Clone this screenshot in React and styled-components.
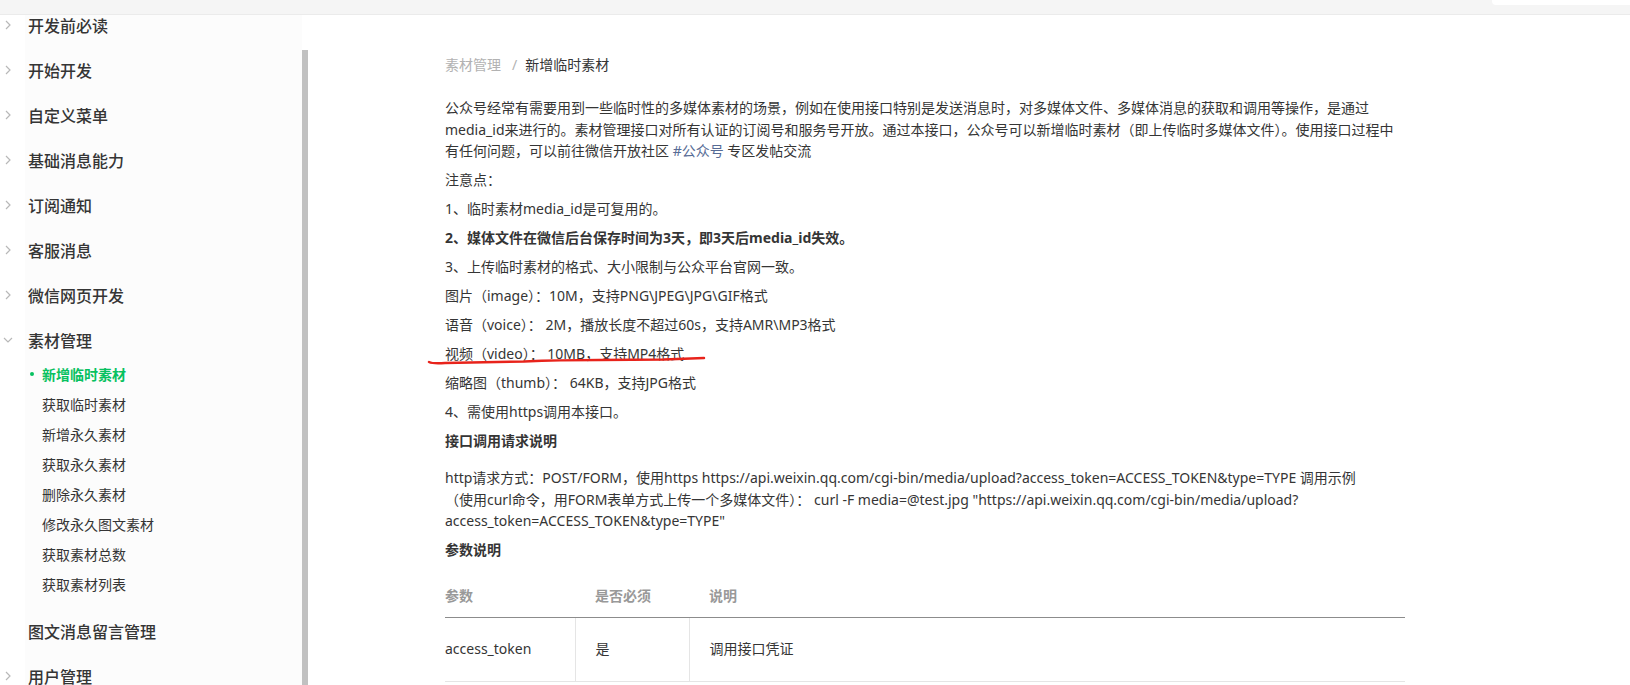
import React from "react";
import styled, { createGlobalStyle } from "styled-components";

const GlobalStyle = createGlobalStyle`
  html, body {
    margin: 0;
    padding: 0;
    background: #fff;
  }
  body {
    font-family: "Noto Sans", "Noto Sans CJK SC", sans-serif;
    color: #353535;
    -webkit-font-smoothing: antialiased;
  }
`;

const Page = styled.div`
  width: 1630px;
  height: 685px;
  display: flex;
  flex-direction: column;
  overflow: hidden;
`;

const TopBar = styled.div`
  height: 14px;
  flex: none;
  display: flex;
  justify-content: flex-end;
  align-items: flex-start;
  background: #f5f5f5;
  border-bottom: 1px solid #ebebeb;
`;

const SearchStub = styled.div`
  width: 138px;
  height: 5px;
  background: #fff;
  border-bottom-left-radius: 4px;
`;

const Body = styled.div`
  flex: 1;
  display: flex;
  min-height: 0;
`;

const Sidebar = styled.nav`
  width: 302px;
  flex: none;
  overflow: hidden;
  background: linear-gradient(to right, #fff 25px, #fcfcfc 25px);
`;

const NavList = styled.div`
  margin-top: -12.5px;
`;

const NavRow = styled.div`
  height: 45px;
  display: grid;
  grid-template-columns: 25px 1fr;
  align-items: center;
  font-family: "Noto Sans CJK SC", sans-serif;
  font-size: 16px;
  font-weight: 500;
  color: #353535;
  white-space: nowrap;
`;

const Arrow = styled.span`
  display: flex;
  align-items: center;
  padding-left: ${(p) => (p.$open ? 3 : 5)}px;
`;

const Label = styled.span`
  padding-left: 3px;
`;

const SubList = styled.div`
  margin-top: -4px;
  padding-bottom: 10px;
`;

const SubRow = styled.div`
  height: 30px;
  display: flex;
  align-items: center;
  padding-left: 30px;
  font-family: "Noto Sans CJK SC", sans-serif;
  font-size: 14px;
  white-space: nowrap;
  color: ${(p) => (p.$active ? "#07c160" : "#353535")};
  font-weight: ${(p) => (p.$active ? 700 : 400)};
`;

const Dot = styled.span`
  width: 4px;
  height: 4px;
  border-radius: 50%;
  margin-right: 8px;
  background: #07c160;
  visibility: ${(p) => (p.$show ? "visible" : "hidden")};
`;

const ScrollTrack = styled.div`
  width: 6px;
  flex: none;
  display: flex;
  flex-direction: column;
`;

const ScrollThumb = styled.div`
  flex: 1;
  margin-top: 35px;
  background: #c1c1c1;
`;

const Main = styled.main`
  flex: 1;
  padding: 39px 0 0 137px;
  overflow: hidden;
`;

const Content = styled.div`
  width: 960px;
  font-size: 14px;
  line-height: 21.5px;
`;

const Crumbs = styled.div`
  display: flex;
  align-items: center;
  margin-bottom: 21.5px;
  white-space: nowrap;
`;

const CrumbLink = styled.span`
  color: #b2b2b2;
`;

const CrumbSep = styled.span`
  color: #b2b2b2;
  margin: 0 8px 0 11px;
`;

const Para = styled.p`
  margin: 0 0 7.5px;
  font-weight: ${(p) => (p.$bold ? 700 : 400)};
  position: relative;
`;

const Line = styled.span`
  display: block;
  white-space: nowrap;
`;

const Link = styled.a`
  color: #576b95;
  text-decoration: none;
`;

const Heading = styled.h4`
  margin: 0 0 ${(p) => p.$gap}px;
  font-size: 14px;
  line-height: 21.5px;
  font-weight: 700;
`;

const Mark = styled.svg`
  position: absolute;
  left: -16px;
  top: 8px;
  overflow: visible;
  pointer-events: none;
`;

const Table = styled.table`
  width: 960px;
  margin-top: 15px;
  border-collapse: collapse;
  table-layout: fixed;
`;

const Th = styled.th`
  height: 41px;
  padding: 0 ${(p) => (p.$first ? "0" : "20px")};
  text-align: left;
  font-weight: 700;
  color: #999;
  border-bottom: 1px solid #8c8c8c;
`;

const Td = styled.td`
  height: 63px;
  padding: 0 ${(p) => (p.$first ? "0" : "20px")};
  border-bottom: 1px solid #e5e5e5;
  border-left: ${(p) => (p.$first ? "none" : "1px solid #e5e5e5")};
`;

const menu = [
  { label: "开发前必读" },
  { label: "开始开发" },
  { label: "自定义菜单" },
  { label: "基础消息能力" },
  { label: "订阅通知" },
  { label: "客服消息" },
  { label: "微信网页开发" },
  {
    label: "素材管理",
    open: true,
    children: [
      "新增临时素材",
      "获取临时素材",
      "新增永久素材",
      "获取永久素材",
      "删除永久素材",
      "修改永久图文素材",
      "获取素材总数",
      "获取素材列表",
    ],
  },
  { label: "图文消息留言管理", bare: true },
  { label: "用户管理" },
];

const Chevron = ({ open }) =>
  open ? (
    <svg width="10" height="6" viewBox="0 0 10 6">
      <path d="M1 1 L5 5 L9 1" fill="none" stroke="#b8b8b8" strokeWidth="1.2" />
    </svg>
  ) : (
    <svg width="6" height="10" viewBox="0 0 6 10">
      <path d="M1 1 L5 5 L1 9" fill="none" stroke="#b8b8b8" strokeWidth="1.2" />
    </svg>
  );

function SideMenu() {
  return (
    <Sidebar>
      <NavList>
        {menu.map((item) => (
          <div key={item.label}>
            <NavRow>
              <Arrow $open={item.open}>
                {!item.bare && <Chevron open={item.open} />}
              </Arrow>
              <Label>{item.label}</Label>
            </NavRow>
            {item.children && (
              <SubList>
                {item.children.map((sub, i) => (
                  <SubRow key={sub} $active={i === 0}>
                    <Dot $show={i === 0} />
                    {sub}
                  </SubRow>
                ))}
              </SubList>
            )}
          </div>
        ))}
      </NavList>
    </Sidebar>
  );
}

const params = [{ name: "access_token", required: "是", desc: "调用接口凭证" }];

export default function App() {
  return (
    <>
      <GlobalStyle />
      <Page>
        <TopBar>
          <SearchStub />
        </TopBar>
        <Body>
          <SideMenu />
          <ScrollTrack>
            <ScrollThumb />
          </ScrollTrack>
          <Main>
            <Content>
              <Crumbs>
                <CrumbLink>素材管理</CrumbLink>
                <CrumbSep>/</CrumbSep>
                <span>新增临时素材</span>
              </Crumbs>

              <Para>
                <Line>
                  公众号经常有需要用到一些临时性的多媒体素材的场景，例如在使用接口特别是发送消息时，对多媒体文件、多媒体消息的获取和调用等操作，是通过
                </Line>
                <Line>
                  media_id来进行的。素材管理接口对所有认证的订阅号和服务号开放。通过本接口，公众号可以新增临时素材（即上传临时多媒体文件）。使用接口过程中
                </Line>
                <Line>
                  有任何问题，可以前往微信开放社区 <Link href="#">#公众号</Link> 专区发帖交流
                </Line>
              </Para>
              <Para>注意点：</Para>
              <Para>1、临时素材media_id是可复用的。</Para>
              <Para $bold>2、媒体文件在微信后台保存时间为3天，即3天后media_id失效。</Para>
              <Para>3、上传临时素材的格式、大小限制与公众平台官网一致。</Para>
              <Para>图片（image）：10M，支持PNG\JPEG\JPG\GIF格式</Para>
              <Para>语音（voice）： 2M，播放长度不超过60s，支持AMR\MP3格式</Para>
              <Para>
                视频（video）： 10MB，支持MP4格式
                <Mark width="280" height="16" viewBox="0 0 280 16">
                  <path
                    d="M0 11 Q4 13 16 12 L95 10.5 Q130 9 170 9 L235 8.5 Q262 7.5 275 7"
                    fill="none"
                    stroke="#e8231b"
                    strokeWidth="2.5"
                    strokeLinecap="round"
                  />
                </Mark>
              </Para>
              <Para>缩略图（thumb）： 64KB，支持JPG格式</Para>
              <Para>4、需使用https调用本接口。</Para>

              <Heading $gap={15.5}>接口调用请求说明</Heading>
              <Para>
                <Line>
                  http请求方式：POST/FORM，使用https
                  https://api.weixin.qq.com/cgi-bin/media/upload?access_token=ACCESS_TOKEN&amp;type=TYPE
                  调用示例
                </Line>
                <Line>
                  （使用curl命令，用FORM表单方式上传一个多媒体文件）： curl -F media=@test.jpg
                  "https://api.weixin.qq.com/cgi-bin/media/upload?
                </Line>
                <Line>access_token=ACCESS_TOKEN&amp;type=TYPE"</Line>
              </Para>

              <Heading $gap={0}>参数说明</Heading>
              <Table>
                <colgroup>
                  <col style={{ width: 130 }} />
                  <col style={{ width: 114 }} />
                  <col />
                </colgroup>
                <thead>
                  <tr>
                    <Th $first>参数</Th>
                    <Th>是否必须</Th>
                    <Th>说明</Th>
                  </tr>
                </thead>
                <tbody>
                  {params.map((p) => (
                    <tr key={p.name}>
                      <Td $first>{p.name}</Td>
                      <Td>{p.required}</Td>
                      <Td>{p.desc}</Td>
                    </tr>
                  ))}
                </tbody>
              </Table>
            </Content>
          </Main>
        </Body>
      </Page>
    </>
  );
}
